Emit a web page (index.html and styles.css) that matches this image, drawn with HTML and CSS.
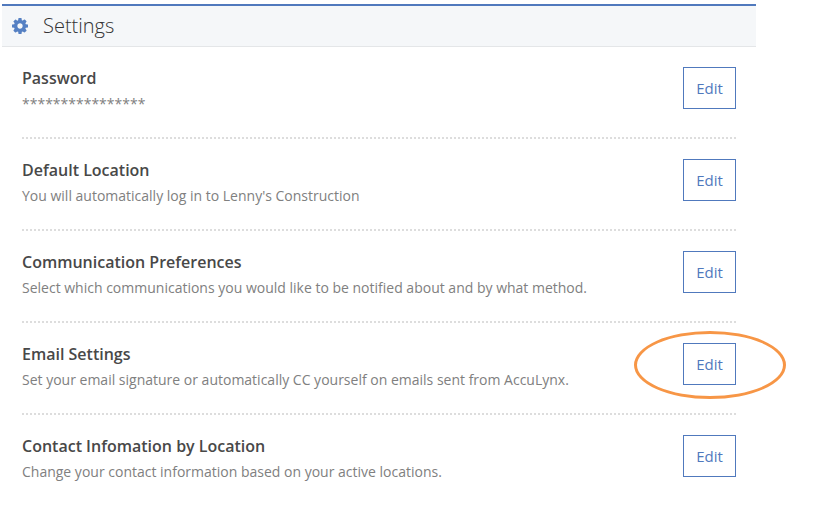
FILE: index.html
```
<!DOCTYPE html>
<html lang="en">
<head>
    <meta charset="UTF-8">
    <meta name="viewport" content="width=device-width, initial-scale=1.0">
    <title>Settings</title>
    <link rel="stylesheet" href="styles.css">
</head>
<body>
    <div class="panel">
        <div class="panel-header">
            <svg class="gear" viewBox="0 128 1536 1536" aria-hidden="true">
                <path d="M1024 896q0-106-75-181t-181-75-181 75-75 181 75 181 181 75 181-75 75-181zm512-109v222q0 12-8 23t-20 13l-185 28q-19 54-39 91 35 50 107 138 10 12 10 25t-9 23q-27 37-99 108t-94 71q-12 0-26-9l-138-108q-44 23-91 38-16 136-29 186-7 28-36 28h-222q-14 0-24.5-8.5t-11.5-21.5l-28-184q-49-16-90-37l-141 107q-10 9-25 9-14 0-25-11-126-114-165-168-7-10-7-23 0-12 8-23 15-21 51-66.5t54-70.5q-27-50-41-99l-183-27q-13-2-21-12.5t-8-23.5v-222q0-12 8-23t19-13l186-28q14-46 39-92-40-57-107-138-10-12-10-24 0-10 9-23 26-36 98.5-107.5t94.5-71.5q13 0 26 10l138 107q44-23 91-38 16-136 29-186 7-28 36-28h222q14 0 24.5 8.5t11.5 21.5l28 184q49 16 90 37l142-107q9-9 24-9 13 0 25 10 129 119 165 170 7 8 7 22 0 12-8 23-15 21-51 66.5t-54 70.5q26 50 41 98l183 28q13 2 21 12.5t8 23.5z"/>
            </svg>
            <h1>Settings</h1>
        </div>
        <div class="settings-list">
            <div class="setting">
                <div class="setting-text">
                    <h2>Password</h2>
                    <p>****************</p>
                </div>
                <button type="button" class="edit-button">Edit</button>
            </div>
            <div class="setting">
                <div class="setting-text">
                    <h2>Default Location</h2>
                    <p>You will automatically log in to Lenny's Construction</p>
                </div>
                <button type="button" class="edit-button">Edit</button>
            </div>
            <div class="setting">
                <div class="setting-text">
                    <h2>Communication Preferences</h2>
                    <p>Select which communications you would like to be notified about and by what method.</p>
                </div>
                <button type="button" class="edit-button">Edit</button>
            </div>
            <div class="setting">
                <div class="setting-text">
                    <h2>Email Settings</h2>
                    <p>Set your email signature or automatically CC yourself on emails sent from AccuLynx.</p>
                </div>
                <div class="highlighted">
                    <button type="button" class="edit-button">Edit</button>
                </div>
            </div>
            <div class="setting">
                <div class="setting-text">
                    <h2>Contact Infomation by Location</h2>
                    <p>Change your contact information based on your active locations.</p>
                </div>
                <button type="button" class="edit-button">Edit</button>
            </div>
        </div>
    </div>
</body>
</html>
```

FILE: styles.css
```
* {
    box-sizing: border-box;
}
body {
    margin: 0;
    padding: 4px 67px 0 2px;
    font-family: "Open Sans", sans-serif;
    background-color: #fff;
}
h1, h2, p {
    margin: 0;
}
.panel-header {
    display: flex;
    align-items: center;
    gap: 15px;
    height: 43px;
    padding: 0 10px;
    background-color: #f5f7f9;
    border-top: 2px solid #5079bd;
    border-bottom: 1px solid #e4e6e8;
}
.gear {
    width: 16px;
    height: 16px;
    fill: #5580c3;
}
.panel-header h1 {
    font-size: 20px;
    font-weight: 300;
    line-height: 28px;
    color: #333;
}
.settings-list {
    padding: 0 20px;
}
.setting {
    display: flex;
    justify-content: space-between;
    align-items: flex-start;
    padding: 20px 0 23px;
    border-bottom: 2px dotted #ddd;
}
.setting:last-child {
    border-bottom: none;
}
.setting h2 {
    font-size: 16px;
    font-weight: 600;
    line-height: 22px;
    color: #484848;
}
.setting p {
    font-size: 14px;
    line-height: 20px;
    margin-top: 5px;
    color: #808080;
}
.edit-button {
    display: block;
    width: 53px;
    height: 42px;
    padding: 0;
    font-family: inherit;
    font-size: 15px;
    color: #5079bd;
    background-color: #fff;
    border: 1px solid #5079bd;
    cursor: pointer;
}
.highlighted {
    position: relative;
}
/* ring around the button */
.highlighted::after {
    content: "";
    position: absolute;
    inset: -12px -50px -14px -49px;
    border: 3px solid #f79646;
    border-radius: 50%;
    pointer-events: none;
}
```
